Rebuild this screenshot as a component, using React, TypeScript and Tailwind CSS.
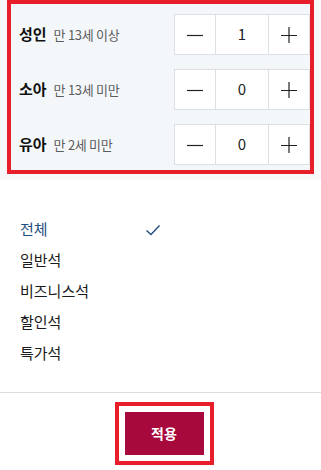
import { useState } from 'react';

const passengers = [
  { key: 'adult', title: '성인', desc: '만 13세 이상', initial: 1 },
  { key: 'child', title: '소아', desc: '만 13세 미만', initial: 0 },
  { key: 'infant', title: '유아', desc: '만 2세 미만', initial: 0 },
];

const seatClasses = ['전체', '일반석', '비즈니스석', '할인석', '특가석'];

const Stepper = ({ value, onChange }: { value: number; onChange: (v: number) => void }) => (
  <div className="flex h-[41px] border border-[#dcdfe3] bg-white">
    <button
      className="w-[41px] flex items-center justify-center border-r border-[#dcdfe3]"
      onClick={() => onChange(Math.max(0, value - 1))}
    >
      <svg width="16" height="16" viewBox="0 0 16 16">
        <path d="M0 8.5h16" stroke="#222" strokeWidth="1.2" />
      </svg>
    </button>
    <div className="w-[53px] flex items-center justify-center text-[15px] text-[#222] border-r border-[#dcdfe3]">
      {value}
    </div>
    <button className="w-[40px] flex items-center justify-center" onClick={() => onChange(value + 1)}>
      <svg width="16" height="16" viewBox="0 0 16 16">
        <path d="M0 8.5h16M8 0v16" stroke="#222" strokeWidth="1.2" />
      </svg>
    </button>
  </div>
);

export default function App() {
  const [counts, setCounts] = useState<Record<string, number>>({ adult: 1, child: 0, infant: 0 });
  const [seat, setSeat] = useState('전체');

  return (
    <div
      className="w-[321px] h-[470px] bg-white overflow-hidden"
      style={{ fontFamily: '"Noto Sans CJK KR", "Noto Sans", sans-serif' }}
    >
      {/* 인원 선택 */}
      <div className="bg-[#f6f8fa] px-[7px] pb-[6px]">
        <div className="border-4 border-[#e81e2b] bg-[#f4f7fa] pt-[10px] pb-[5px] flex flex-col gap-[14px]">
          {passengers.map(p => (
            <div key={p.key} className="flex items-center justify-between pl-[8px]">
              <div className="flex items-baseline gap-[7px]">
                <span className="text-[15px] font-bold text-[#111]">{p.title}</span>
                <span className="text-[13px] text-[#5c5c5c] tracking-[-0.3px]">{p.desc}</span>
              </div>
              <Stepper
                value={counts[p.key]}
                onChange={v => setCounts({ ...counts, [p.key]: v })}
              />
            </div>
          ))}
        </div>
      </div>

      {/* 좌석 등급 */}
      <ul className="pt-[34px] pl-[20px] pb-[23px]">
        {seatClasses.map(s => (
          <li
            key={s}
            className={`flex items-center h-[31px] text-[15px] cursor-pointer ${s === seat ? 'text-[#1f4f80]' : 'text-[#1a1a1a]'}`}
            onClick={() => setSeat(s)}
          >
            <span className="w-[125px]">{s}</span>
            {s === seat && (
              <svg width="16" height="12" viewBox="0 0 16 12">
                <path d="M1.5 6.5l4.5 4L14.5 1.5" fill="none" stroke="#1f4f80" strokeWidth="1.4" />
              </svg>
            )}
          </li>
        ))}
      </ul>

      <div className="border-t border-[#dddddd] flex justify-center pl-[7px] pt-[9px]">
        <div className="border-4 border-[#e81e2b] px-[6px] py-[6px]">
          <button className="w-[79px] h-[43px] bg-[#a8093c] text-white text-[14px] font-bold">적용</button>
        </div>
      </div>
    </div>
  );
}
